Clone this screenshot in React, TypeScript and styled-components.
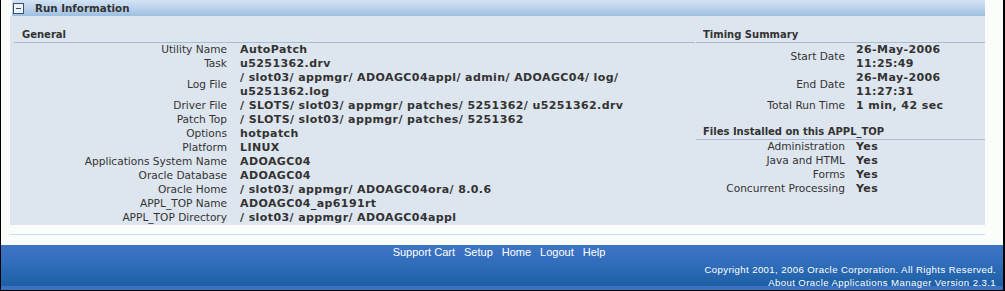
import * as React from "react";
import styled, { createGlobalStyle } from "styled-components";

const GlobalStyle = createGlobalStyle`
  html, body {
    margin: 0;
    padding: 0;
    background: #fbfdfb;
  }
`;

const Page = styled.div`
  box-sizing: border-box;
  width: 1005px;
  height: 291px;
  display: flex;
  flex-direction: column;
  background: #fbfdfb;
  border-left: 1px solid #000;
  border-right: 2px solid #000;
  border-bottom: 1px solid #000;
  font-family: "DejaVu Sans", Verdana, sans-serif;
  color: #333;
`;

const Content = styled.div`
  padding: 0 18px 0 9px;
`;

const TitleBar = styled.div`
  height: 16px;
  margin-left: 2px;
  display: flex;
  align-items: center;
  gap: 11px;
  padding-left: 1px;
  background: linear-gradient(to bottom, #d3e3f3 0%, #b9d1ea 55%, #9dbfe1 100%);
`;

const Title = styled.span`
  font-weight: bold;
  font-size: 10.3px;
  color: #333;
`;

const Panel = styled.div`
  height: 209px;
  display: flex;
  gap: 1px;
  padding-left: 4px;
  background: #dde5ee;
`;

const Section = styled.div<{ $width?: number }>`
  width: ${(p) => (p.$width ? `${p.$width}px` : "auto")};
  flex: ${(p) => (p.$width ? "none" : "1")};
`;

const Heading = styled.div<{ $indent: number }>`
  padding: 12px 0 0 ${(p) => p.$indent}px;
  line-height: 14px;
  font-size: 10px;
  font-weight: bold;
  color: #333;
  border-bottom: 1px solid #a9bcd2;
`;

const Grid = styled.div<{ $label: number; $value: string; $gap: number }>`
  display: grid;
  grid-template-columns: ${(p) => p.$label}px ${(p) => p.$value};
  column-gap: ${(p) => p.$gap}px;
  line-height: 14px;
`;

const Label = styled.div`
  text-align: right;
  align-self: center;
  line-height: 13px;
  margin-bottom: 1px;
  font-size: 10.6px;
  color: #333;
  white-space: nowrap;
`;

const Value = styled.div`
  font-size: 11px;
  font-weight: bold;
  letter-spacing: 0.4px;
  color: #333;
`;

const Separator = styled.div`
  margin: 9px 0 10px;
  height: 1px;
  background: #c6dcf2;
`;

const Footer = styled.div`
  flex: 1;
  display: flex;
  flex-direction: column;
  background: linear-gradient(
    to bottom,
    #3e75c6 0%,
    #2f6cb9 45%,
    #1c60a4 91%,
    #3b70c3 91%,
    #3b70c3 100%
  );
  color: #fff;
  font-family: "Liberation Sans", Arial, sans-serif;
`;

const Links = styled.div`
  display: flex;
  justify-content: center;
  gap: 9px;
  padding-right: 6px;
  font-size: 11px;
  line-height: 14px;
`;

const FooterLink = styled.span`
  color: #fff;
`;

const Copyright = styled.div`
  margin-top: 4px;
  padding-right: 7px;
  text-align: right;
  font-size: 9.6px;
  line-height: 13px;
  letter-spacing: 0.4px;
`;

const MinusIcon = () => (
  <svg width="11" height="11" viewBox="0 0 11 11">
    <rect x="0.5" y="0.5" width="10" height="10" fill="#edf2f8" stroke="#3f5168" />
    <line x1="3" y1="5.5" x2="8" y2="5.5" stroke="#3f5168" />
  </svg>
);

const general: [string, string][] = [
  ["Utility Name", "AutoPatch"],
  ["Task", "u5251362.drv"],
  ["Log File", "/ slot03/ appmgr/ ADOAGC04appl/ admin/ ADOAGC04/ log/ u5251362.log"],
  ["Driver File", "/ SLOTS/ slot03/ appmgr/ patches/ 5251362/ u5251362.drv"],
  ["Patch Top", "/ SLOTS/ slot03/ appmgr/ patches/ 5251362"],
  ["Options", "hotpatch"],
  ["Platform", "LINUX"],
  ["Applications System Name", "ADOAGC04"],
  ["Oracle Database", "ADOAGC04"],
  ["Oracle Home", "/ slot03/ appmgr/ ADOAGC04ora/ 8.0.6"],
  ["APPL_TOP Name", "ADOAGC04_ap6191rt"],
  ["APPL_TOP Directory", "/ slot03/ appmgr/ ADOAGC04appl"],
];

const timing: [string, string][] = [
  ["Start Date", "26-May-2006 11:25:49"],
  ["End Date", "26-May-2006 11:27:31"],
  ["Total Run Time", "1 min, 42 sec"],
];

const files: [string, string][] = [
  ["Administration", "Yes"],
  ["Java and HTML", "Yes"],
  ["Forms", "Yes"],
  ["Concurrent Processing", "Yes"],
];

const renderRows = (rows: [string, string][]) =>
  rows.map(([label, value]) => (
    <React.Fragment key={label}>
      <Label>{label}</Label>
      <Value>{value}</Value>
    </React.Fragment>
  ));

export default function App() {
  return (
    <>
      <GlobalStyle />
      <Page>
        <Content>
          <TitleBar>
            <MinusIcon />
            <Title>Run Information</Title>
          </TitleBar>
          <Panel>
            <Section $width={681}>
              <Heading $indent={8}>General</Heading>
              <Grid $label={213} $value="400px" $gap={13}>
                {renderRows(general)}
              </Grid>
            </Section>
            <Section>
              <Heading $indent={7}>Timing Summary</Heading>
              <Grid $label={149} $value="1fr" $gap={11}>
                {renderRows(timing)}
              </Grid>
              <Heading $indent={7}>Files Installed on this APPL_TOP</Heading>
              <Grid $label={149} $value="1fr" $gap={11}>
                {renderRows(files)}
              </Grid>
            </Section>
          </Panel>
          <Separator />
        </Content>
        <Footer>
          <Links>
            {["Support Cart", "Setup", "Home", "Logout", "Help"].map((l) => (
              <FooterLink key={l}>{l}</FooterLink>
            ))}
          </Links>
          <Copyright>
            Copyright 2001, 2006 Oracle Corporation. All Rights Reserved.
            <br />
            About Oracle Applications Manager Version 2.3.1
          </Copyright>
        </Footer>
      </Page>
    </>
  );
}
